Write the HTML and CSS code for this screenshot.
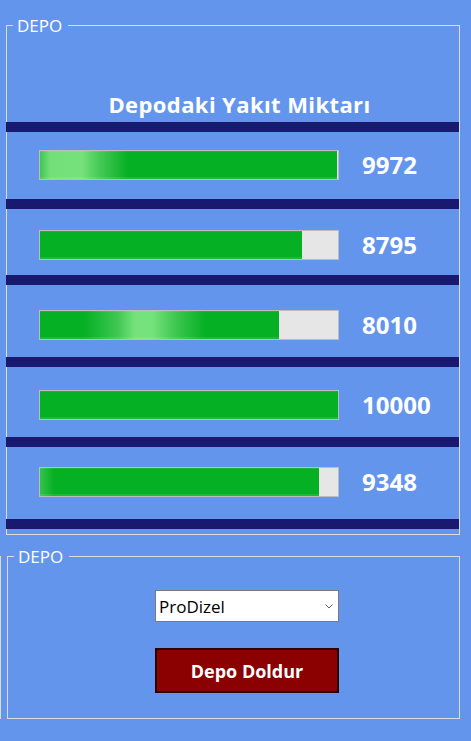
FILE: index.html
```html
<!DOCTYPE html>
<html lang="tr">
<head>
<meta charset="utf-8">
<title>Depo</title>
<link rel="stylesheet" href="styles.css">
</head>
<body>
<div class="window">
  <fieldset class="group group--tanks">
    <legend class="group__caption">DEPO</legend>
    <div class="tanks">
      <h1 class="tanks__title">Depodaki Yakıt Miktarı</h1>
      <div class="divider"></div>
      <div class="tank tank--1">
        <div class="progress"><div class="progress__fill progress__fill--glow-start" style="width: 99.72%"></div></div>
        <span class="tank__value">9972</span>
      </div>
      <div class="divider"></div>
      <div class="tank tank--2">
        <div class="progress"><div class="progress__fill" style="width: 87.95%"></div></div>
        <span class="tank__value">8795</span>
      </div>
      <div class="divider"></div>
      <div class="tank tank--3">
        <div class="progress"><div class="progress__fill progress__fill--glow-mid" style="width: 80.10%"></div></div>
        <span class="tank__value">8010</span>
      </div>
      <div class="divider"></div>
      <div class="tank tank--4">
        <div class="progress"><div class="progress__fill" style="width: 100%"></div></div>
        <span class="tank__value">10000</span>
      </div>
      <div class="divider"></div>
      <div class="tank tank--5">
        <div class="progress"><div class="progress__fill progress__fill--glow-edge" style="width: 93.48%"></div></div>
        <span class="tank__value">9348</span>
      </div>
      <div class="divider"></div>
    </div>
  </fieldset>

  <div class="bottom">
    <div class="stub"></div>
    <fieldset class="group group--fill">
      <legend class="group__caption">DEPO</legend>
      <div class="fill-panel">
        <div class="combo" role="combobox" aria-expanded="false">
          <span class="combo__text">ProDizel</span>
          <svg class="combo__arrow" width="8" height="5" viewBox="0 0 8 5" aria-hidden="true">
            <path d="M0.5 0.5 L4 4 L7.5 0.5" fill="none" stroke="#5f5f5f" stroke-width="1"/>
          </svg>
        </div>
        <button class="btn-fill" type="button">Depo Doldur</button>
      </div>
    </fieldset>
  </div>
</div>
</body>
</html>
```

FILE: styles.css
```css
* { box-sizing: border-box; }

html, body {
  margin: 0;
  padding: 0;
  background: #6495ed;
}

body {
  width: 471px;
  height: 741px;
  overflow: hidden;
  font-family: "Open Sans", "Noto Sans", sans-serif;
  color: #ffffff;
}

.window {
  padding-top: 14px;
}

.group {
  margin: 0;
  padding: 0;
  border: 1px solid #dcdcdc;
  min-inline-size: 0;
}

.group__caption {
  margin-left: 6px;
  padding: 0 6px 0 4px;
  font-size: 17px;
  line-height: 23px;
  font-weight: 400;
  color: #ffffff;
}

.group--tanks {
  margin-left: 6px;
  width: 454px;
}

.tanks {
  display: flex;
  flex-direction: column;
  padding-top: 53px;
  padding-bottom: 5px;
}

.tanks__title {
  margin: 0 0 4px 0;
  padding-left: 13px;
  text-align: center;
  font-size: 22px;
  line-height: 28px;
  font-weight: 700;
  letter-spacing: 0.4px;
}

.divider {
  margin-left: -1px;
  width: 453px;
  height: 10px;
  background: #191970;
}

.tank {
  display: flex;
  align-items: center;
  align-self: flex-start;
  padding-left: 32px;
}

.tank--1 { padding-top: 18px; height: 67px; align-items: flex-start; }
.tank--2 { padding-top: 21px; height: 66px; align-items: flex-start; }
.tank--3 { padding-top: 25px; height: 72px; align-items: flex-start; }
.tank--4 { padding-top: 23px; height: 70px; align-items: flex-start; }
.tank--5 { padding-top: 20px; height: 72px; align-items: flex-start; }

.progress {
  width: 300px;
  height: 30px;
  border: 1px solid #bcbcbc;
  background: #e6e6e6;
  flex: none;
}

.progress__fill {
  height: 100%;
  background: #06b025;
  box-shadow: inset 0 -2px 0 rgba(255, 255, 255, 0.10), inset 0 1px 0 rgba(255, 255, 255, 0.08);
}

.progress__fill--glow-start {
  background: linear-gradient(to right,
    #3ec651 0px, #72df79 10px, #76e17b 42px, #44c956 60px, #06b025 88px, #06b025 100%);
}

.progress__fill--glow-mid {
  background: linear-gradient(to right,
    #06b025 0px, #06b025 45px, #40c853 78px, #76e27b 95px, #76e27b 112px, #3fc851 135px, #06b025 165px, #06b025 100%);
}

.progress__fill--glow-edge {
  background: linear-gradient(to right, #36c24a 0px, #06b025 14px, #06b025 100%);
}

.tank__value {
  margin-left: 23px;
  height: 30px;
  font-size: 24px;
  line-height: 30px;
  font-weight: 700;
}

.bottom {
  display: flex;
  margin-top: 10px;
}

.stub {
  width: 1px;
  height: 163px;
  margin-top: 11px;
  background: #dcdcdc;
  flex: none;
}

.group--fill {
  margin-left: 6px;
  width: 453px;
}

.fill-panel {
  display: flex;
  flex-direction: column;
  align-items: flex-start;
  padding: 22px 0 25px 147px;
  gap: 26px;
}

.combo {
  width: 184px;
  height: 32px;
  border: 1px solid #7a7a7a;
  background: #ffffff;
  display: flex;
  align-items: center;
  justify-content: space-between;
  padding: 0 5px 0 3px;
  color: #000000;
  font-size: 17px;
}

.combo__arrow {
  display: block;
}

.btn-fill {
  width: 184px;
  height: 45px;
  margin: 0;
  background: #8b0000;
  border: 2px solid #300000;
  color: #ffffff;
  font-family: "Open Sans", "Noto Sans", sans-serif;
  font-size: 18px;
  font-weight: 700;
  padding: 0;
}
```
